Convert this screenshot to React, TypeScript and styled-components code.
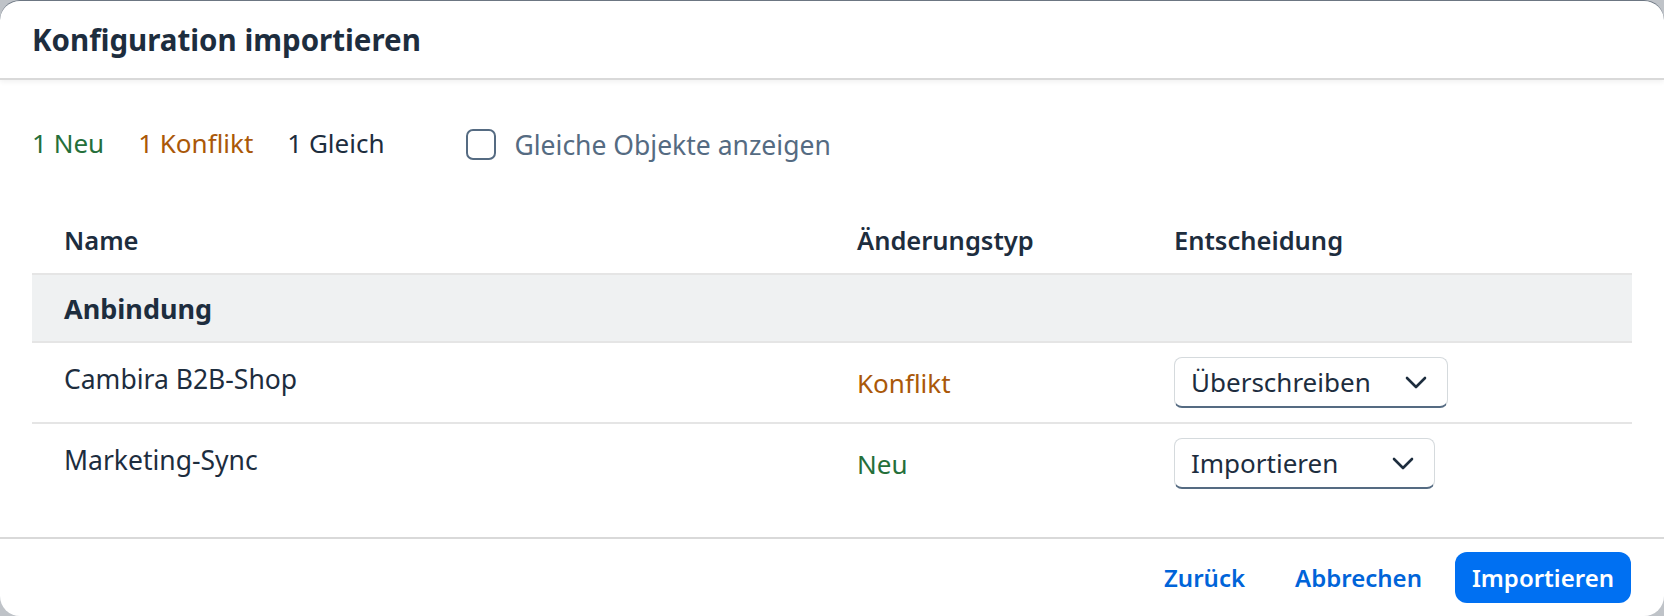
import styled, { createGlobalStyle } from 'styled-components'

const GlobalStyle = createGlobalStyle`
  html, body {
    margin: 0;
    padding: 0;
    background: #bfc3c8;
  }
  body {
    font-family: "Noto Sans", "Open Sans", sans-serif;
    color: #1d2d3e;
  }
`

type Change = 'neu' | 'konflikt'

interface Row {
  name: string
  change: Change
  decision: string
  selectWidth: number
}

const rows: Row[] = [
  { name: 'Cambira B2B-Shop', change: 'konflikt', decision: 'Überschreiben', selectWidth: 274 },
  { name: 'Marketing-Sync', change: 'neu', decision: 'Importieren', selectWidth: 261 },
]

const changeLabel: Record<Change, string> = {
  neu: 'Neu',
  konflikt: 'Konflikt',
}

const Chevron = () => (
  <svg width="22" height="13" viewBox="0 0 22 13" fill="none">
    <path d="M2 2 L11 11 L20 2" stroke="#1d2d3e" strokeWidth="2.6" strokeLinecap="round" strokeLinejoin="round" />
  </svg>
)

const App = () => {
  return (
    <>
      <GlobalStyle />
      <Dialog>
        <Header>
          <Title>Konfiguration importieren</Title>
        </Header>
        <Content>
          <Summary>
            <Count tone="neu">1 Neu</Count>
            <Count tone="konflikt">1 Konflikt</Count>
            <Count tone="gleich">1 Gleich</Count>
            <CheckLabel>
              <CheckBox />
              Gleiche Objekte anzeigen
            </CheckLabel>
          </Summary>
          <Table>
            <HeadCell>Name</HeadCell>
            <HeadCell>Änderungstyp</HeadCell>
            <HeadCell>Entscheidung</HeadCell>
            <GroupRow>Anbindung</GroupRow>
            {rows.map((row, i) => (
              <RowCells key={row.name} last={i === rows.length - 1}>
                <Cell>
                  <NameText>{row.name}</NameText>
                </Cell>
                <Cell>
                  <ChangeText tone={row.change}>{changeLabel[row.change]}</ChangeText>
                </Cell>
                <Cell>
                  <Select style={{ width: row.selectWidth }}>
                    <span>{row.decision}</span>
                    <Chevron />
                  </Select>
                </Cell>
              </RowCells>
            ))}
          </Table>
        </Content>
        <Footer>
          <GhostButton>Zurück</GhostButton>
          <GhostButton>Abbrechen</GhostButton>
          <PrimaryButton>Importieren</PrimaryButton>
        </Footer>
      </Dialog>
    </>
  )
}

const toneColor: Record<string, string> = {
  neu: '#256f3a',
  konflikt: '#aa5808',
  gleich: '#1d2d3e',
}

const Dialog = styled.div`
  width: 1664px;
  height: 616px;
  box-sizing: border-box;
  background: #fff;
  border-radius: 20px;
  border-top: 1px solid #6c7682;
  display: flex;
  flex-direction: column;
  overflow: hidden;
`

const Header = styled.div`
  height: 79px;
  flex-shrink: 0;
  box-sizing: border-box;
  padding: 0 32px;
  display: flex;
  align-items: center;
  border-bottom: 2px solid #d9d9d9;
  box-shadow: 0 2px 5px rgba(0, 0, 0, 0.06);
  position: relative;
`

const Title = styled.h1`
  margin: -1px 0 0;
  font-size: 29.5px;
  font-weight: 700;
  color: #1d2d3e;
`

const Content = styled.div`
  flex: 1;
  padding: 0 32px;
`

const Summary = styled.div`
  display: flex;
  align-items: center;
  height: 52px;
  margin: 37px 0 38px;
  font-size: 26px;
`

const Count = styled.span<{ tone: string }>`
  color: ${p => toneColor[p.tone]};
  margin-right: 34px;
`

const CheckLabel = styled.label`
  display: flex;
  align-items: center;
  gap: 18px;
  margin-left: 48px;
  margin-top: 3px;
  color: #556b82;
  font-size: 26.5px;
`

const CheckBox = styled.span`
  width: 30px;
  height: 31px;
  box-sizing: border-box;
  border: 2px solid #556b82;
  border-radius: 7px;
  background: #fff;
`

const Table = styled.div`
  display: grid;
  grid-template-columns: 793px 317px 1fr;
  font-size: 26px;
`

const HeadCell = styled.div`
  height: 66px;
  display: flex;
  align-items: center;
  padding-left: 32px;
  font-size: 25.5px;
  font-weight: 600;
  border-bottom: 2px solid #e5e5e5;
`

const GroupRow = styled.div`
  grid-column: 1 / -1;
  height: 66px;
  display: flex;
  align-items: center;
  padding-left: 32px;
  background: #eff1f2;
  font-size: 27px;
  font-weight: 700;
  border-bottom: 2px solid #e5e5e5;
`

const RowCells = styled.div<{ last: boolean }>`
  display: contents;

  & > div {
    height: 81px;
    border-bottom: ${p => (p.last ? '2px solid transparent' : '2px solid #e5e5e5')};
  }
`

const Cell = styled.div`
  box-sizing: border-box;
  display: flex;
  align-items: center;
  padding-left: 32px;
`

const NameText = styled.span`
  font-size: 26.5px;
  margin-bottom: 8px;
`

const ChangeText = styled.span<{ tone: Change }>`
  color: ${p => toneColor[p.tone]};
`

const Select = styled.div`
  height: 51px;
  box-sizing: border-box;
  display: flex;
  align-items: center;
  justify-content: space-between;
  padding: 0 20px 0 16px;
  background: #fff;
  border: 1px solid #d5dadd;
  border-bottom: 2px solid #556b82;
  border-radius: 8px;
  color: #1d2d3e;
`

const Footer = styled.div`
  height: 79px;
  flex-shrink: 0;
  box-sizing: border-box;
  border-top: 2px solid #d9d9d9;
  padding: 0 33px 0 0;
  display: flex;
  align-items: center;
  justify-content: flex-end;
  gap: 16px;
`

const GhostButton = styled.button`
  height: 51px;
  padding: 0 17px;
  border: none;
  background: transparent;
  color: #0064d9;
  font-family: "Noto Sans", sans-serif;
  font-size: 24px;
  font-weight: 600;
  border-radius: 12px;
  cursor: pointer;
`

const PrimaryButton = styled(GhostButton)`
  background: #0070f2;
  color: #fff;
`

export default App
